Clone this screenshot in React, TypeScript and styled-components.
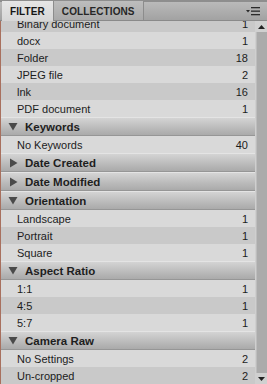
import React, { useLayoutEffect, useRef } from "react";
import styled, { createGlobalStyle } from "styled-components";

const GlobalStyle = createGlobalStyle`
  html, body { margin: 0; padding: 0; background: #c6c6c6; }
  * { box-sizing: border-box; }
`;

const Panel = styled.div`
  width: 267px;
  height: 384px;
  display: flex;
  flex-direction: column;
  overflow: hidden;
  font-family: "Liberation Sans", Arial, sans-serif;
  background: #c6c6c6;
`;

const TabBar = styled.div`
  height: 21px;
  flex: none;
  display: flex;
  align-items: flex-end;
  padding-left: 2px;
  border-top: 2px solid #8e8e8e;
  background: linear-gradient(#bababa, #a2a2a2);
  border-bottom: 1px solid #8a8a8a;
`;

const Tab = styled.div<{ $active?: boolean }>`
  height: ${(p) => (p.$active ? "20px" : "19px")};
  margin-bottom: ${(p) => (p.$active ? "-1px" : "0")};
  display: flex;
  align-items: center;
  padding: 1px 8px 0 8px;
  font-size: 10px;
  font-weight: bold;
  letter-spacing: 0.1px;
  color: ${(p) => (p.$active ? "#161616" : "#262626")};
  background: ${(p) =>
    p.$active
      ? "linear-gradient(#e6e6e6, #d6d6d6)"
      : "linear-gradient(#bdbdbd, #a9a9a9)"};
  border-right: 1px solid #8c8c8c;
`;

const Spacer = styled.div`
  flex: 1;
`;

const MenuButton = styled.div`
  align-self: center;
  margin-right: 7px;
  margin-top: 1px;
  display: flex;
  align-items: center;
`;

const Body = styled.div`
  flex: 1;
  display: flex;
  min-height: 0;
`;

const List = styled.div`
  flex: 1;
  overflow: hidden;
  border-left: 1px solid #a8705e;
`;

const Row = styled.div<{ $alt?: boolean }>`
  height: 17px;
  display: flex;
  align-items: center;
  justify-content: space-between;
  padding: 0 7px 0 16px;
  font-size: 11px;
  color: #1c1c1c;
  background: ${(p) => (p.$alt ? "#c9c9c9" : "#d9d9d9")};
`;

const Header = styled.div`
  height: 19px;
  display: flex;
  align-items: center;
  padding-left: 7px;
  gap: 7px;
  font-size: 11.5px;
  font-weight: bold;
  color: #1e1e1e;
  background: linear-gradient(#d4d4d4, #bababa 60%, #aaaaaa);
  border-top: 1px solid #e4e4e4;
  border-bottom: 1px solid #969696;
`;

const Arrow = styled.div`
  width: 10px;
  display: flex;
  justify-content: center;
  align-items: center;
`;

const Scrollbar = styled.div`
  width: 12px;
  flex: none;
  display: flex;
  flex-direction: column;
  background: #cfcfcf;
`;

const ScrollButton = styled.div`
  height: 11px;
  flex: none;
  display: flex;
  align-items: center;
  justify-content: center;
  background: #d0d0d0;
`;

const Thumb = styled.div`
  flex: 1;
  margin-left: 1px;
  background: #ababab;
  border-left: 1px solid #bdbdbd;
`;

type Group = {
  title: string;
  open: boolean;
  items: [string, number][];
};

const groups: Group[] = [
  {
    title: "",
    open: true,
    items: [
      ["Binary document", 1],
      ["docx", 1],
      ["Folder", 18],
      ["JPEG file", 2],
      ["lnk", 16],
      ["PDF document", 1],
    ],
  },
  { title: "Keywords", open: true, items: [["No Keywords", 40]] },
  { title: "Date Created", open: false, items: [] },
  { title: "Date Modified", open: false, items: [] },
  {
    title: "Orientation",
    open: true,
    items: [
      ["Landscape", 1],
      ["Portrait", 1],
      ["Square", 1],
    ],
  },
  {
    title: "Aspect Ratio",
    open: true,
    items: [
      ["1:1", 1],
      ["4:5", 1],
      ["5:7", 1],
    ],
  },
  {
    title: "Camera Raw",
    open: true,
    items: [
      ["No Settings", 2],
      ["Un-cropped", 2],
    ],
  },
];

const Triangle = ({ open }: { open: boolean }) =>
  open ? (
    <svg width="10" height="9" viewBox="0 0 10 9">
      <polygon points="0.5,1 9.5,1 5,8.5" fill="#4a4a4a" />
    </svg>
  ) : (
    <svg width="9" height="10" viewBox="0 0 9 10">
      <polygon points="1,0.5 8.5,5 1,9.5" fill="#4a4a4a" />
    </svg>
  );

export default function App() {
  const listRef = useRef<HTMLDivElement>(null);
  useLayoutEffect(() => {
    if (listRef.current) listRef.current.scrollTop = 7;
  }, []);

  return (
    <>
      <GlobalStyle />
      <Panel>
        <TabBar>
          <Tab $active>FILTER</Tab>
          <Tab>COLLECTIONS</Tab>
          <Spacer />
          <MenuButton>
            <svg width="14" height="9" viewBox="0 0 14 9">
              <polygon points="0,3 4,3 2,5.5" fill="#2a2a2a" />
              <rect x="5" y="0" width="9" height="1.3" fill="#2a2a2a" />
              <rect x="5" y="3.5" width="9" height="1.3" fill="#2a2a2a" />
              <rect x="5" y="7" width="9" height="1.3" fill="#2a2a2a" />
            </svg>
          </MenuButton>
        </TabBar>
        <Body>
          <List ref={listRef}>
            {groups.map((g, gi) => (
              <React.Fragment key={gi}>
                {g.title && (
                  <Header>
                    <Arrow>
                      <Triangle open={g.open} />
                    </Arrow>
                    {g.title}
                  </Header>
                )}
                {g.items.map(([label, n], i) => (
                  <Row key={label} $alt={gi === 0 ? i % 2 === 0 : i % 2 === 1}>
                    <span>{label}</span>
                    <span>{n}</span>
                  </Row>
                ))}
              </React.Fragment>
            ))}
          </List>
          <Scrollbar>
            <ScrollButton>
              <svg width="7" height="4" viewBox="0 0 7 4">
                <polygon points="0,4 7,4 3.5,0" fill="#222" />
              </svg>
            </ScrollButton>
            <Thumb />
            <ScrollButton>
              <svg width="7" height="4" viewBox="0 0 7 4">
                <polygon points="0,0 7,0 3.5,4" fill="#222" />
              </svg>
            </ScrollButton>
          </Scrollbar>
        </Body>
      </Panel>
    </>
  );
}
